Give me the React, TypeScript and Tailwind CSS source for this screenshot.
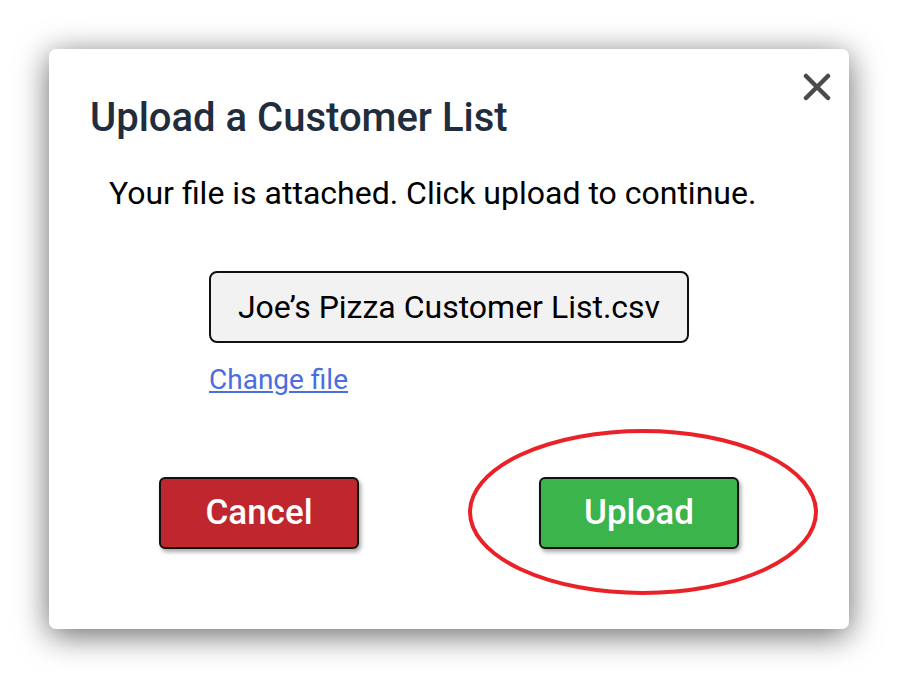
import React from "react";

export default function App() {
  return (
    <div className="w-[897px] h-[677px] bg-white pt-[49px] pl-[49px]" style={{ fontFamily: "Roboto, 'Noto Sans', sans-serif" }}>
      <div className="relative w-[800px] h-[580px] bg-white rounded-[7px] shadow-[0_6px_32px_rgba(0,0,0,0.6)] flex flex-col">
        <button className="absolute left-[754px] top-[24px] w-[28px] h-[28px]" aria-label="Close">
          <svg viewBox="0 0 28 28" width="28" height="28">
            <path d="M3 3 L25 25 M25 3 L3 25" stroke="#4a4a4a" strokeWidth="4.5" strokeLinecap="round" fill="none" />
          </svg>
        </button>
        <h1 className="ml-[41px] mt-[44px] text-[40px] leading-[50px] font-medium text-[#212d3d] whitespace-nowrap">Upload a Customer List</h1>
        <p className="ml-[60px] mt-[30px] text-[32px] leading-[40px] text-black whitespace-nowrap">Your file is attached. Click upload to continue.</p>
        <div className="mt-[58px] flex flex-col items-center">
          <div className="w-[480px] h-[72px] bg-[#f2f2f2] border-2 border-[#111] rounded-[8px] flex items-center justify-center text-[32px] text-black whitespace-nowrap">
            Joe’s Pizza Customer List.csv
          </div>
          <div className="w-[480px] mt-[19px] leading-[36px]">
            <a href="#" className="text-[28px] leading-[36px] text-[#4a6ee0] underline">Change file</a>
          </div>
        </div>
        <div className="mt-[75px] flex justify-center gap-[180px]">
          <button className="w-[200px] h-[72px] bg-[#c0262e] border-2 border-[#111] rounded-[6px] text-white text-[35px] font-medium shadow-[2px_3px_4px_rgba(0,0,0,0.35)]">Cancel</button>
          <div className="relative">
            <button className="w-[200px] h-[72px] bg-[#3bb44b] border-2 border-[#111] rounded-[6px] text-white text-[35px] font-medium shadow-[2px_3px_4px_rgba(0,0,0,0.35)]">Upload</button>
            <svg className="absolute left-[-73px] top-[-50px] pointer-events-none" width="354" height="170" viewBox="0 0 354 170">
              <ellipse cx="177" cy="85" rx="173" ry="81" fill="none" stroke="#ea2228" strokeWidth="4" />
            </svg>
          </div>
        </div>
      </div>
    </div>
  );
}
